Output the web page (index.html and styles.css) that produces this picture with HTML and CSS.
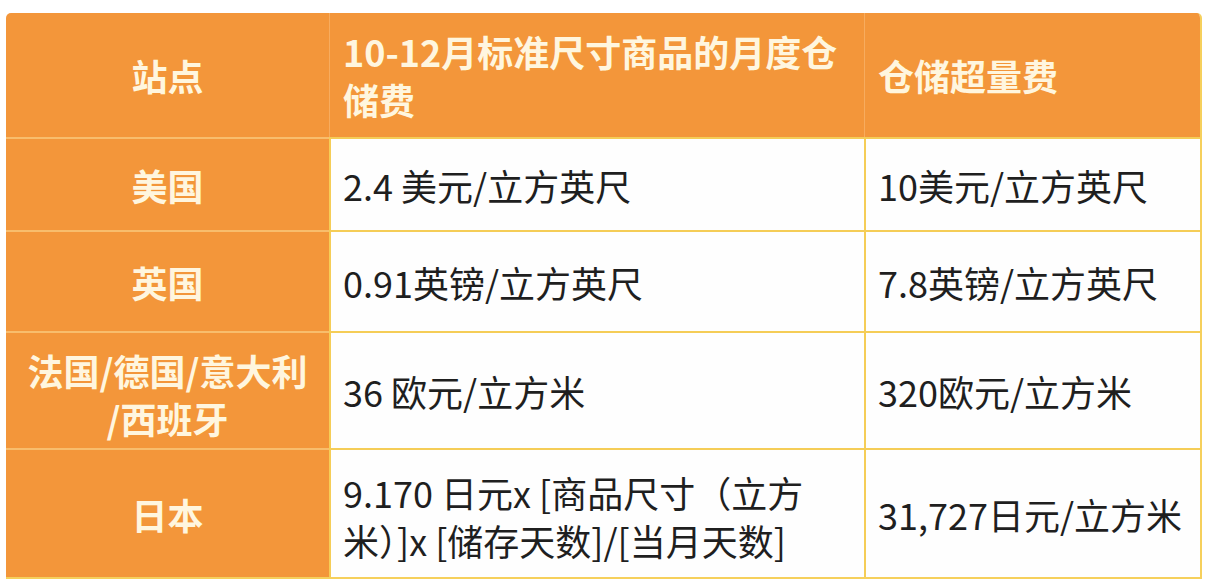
FILE: index.html
```html
<!DOCTYPE html>
<html lang="zh-CN">
<head>
<meta charset="utf-8">
<title>仓储费</title>
<link rel="stylesheet" href="styles.css">
</head>
<body>
<div class="page">
  <div class="fees">
    <div class="cell head site-col">站点</div>
    <div class="cell head sep">10-12月标准尺寸商品的月度仓<br>储费</div>
    <div class="cell head sep">仓储超量费</div>

    <div class="cell site">美国</div>
    <div class="cell val">2.4 美元/立方英尺</div>
    <div class="cell val">10美元/立方英尺</div>

    <div class="cell site">英国</div>
    <div class="cell val">0.91英镑/立方英尺</div>
    <div class="cell val">7.8英镑/立方英尺</div>

    <div class="cell site tight">法国/德国/意大利<br>/西班牙</div>
    <div class="cell val">36 欧元/立方米</div>
    <div class="cell val">320欧元/立方米</div>

    <div class="cell site">日本</div>
    <div class="cell val multi">9.170 日元x [商品尺寸（立方<br>米）]x [储存天数]/[当月天数]</div>
    <div class="cell val">31,727日元/立方米</div>
  </div>
</div>
</body>
</html>
```
FILE: styles.css
```css
html, body {
  margin: 0;
  padding: 0;
  background: #ffffff;
}

.page {
  padding: 13px 0 0 6px;
}

.fees {
  display: grid;
  width: 1196px;
  box-sizing: border-box;
  grid-template-columns: 323px 535px 338px;
  grid-template-rows: 124px 93px 101px 117px 129px;
  border-radius: 5px 5px 0 0;
  overflow: hidden;
  border-right: 2px solid #f6d05c;
  border-bottom: 2px solid #f6d05c;
  font-family: "Noto Sans CJK SC", "Noto Sans", sans-serif;
  font-size: 36px;
}

.cell {
  display: flex;
  align-items: center;
  box-sizing: border-box;
  padding: 0 13px;
  line-height: 48px;
  white-space: nowrap;
}

.head {
  background: #f3963a;
  color: #fff6df;
  font-weight: 700;
}

.head.site-col {
  justify-content: center;
}

.head.sep {
  border-left: 1px solid #f7ac5e;
  padding-left: 13px;
}

.site {
  background: #f3963a;
  color: #fff6df;
  font-weight: 700;
  justify-content: center;
  text-align: center;
  border-top: 2px solid #f8bd6c;
}

.site.tight {
  padding-top: 6px;
}

.val {
  background: #fefefe;
  color: #1f1f1f;
  border-top: 2px solid #f5cd57;
  border-left: 2px solid #f5cd57;
  padding-left: 12px;
}

.val.multi {
  padding-top: 4px;
}
```
